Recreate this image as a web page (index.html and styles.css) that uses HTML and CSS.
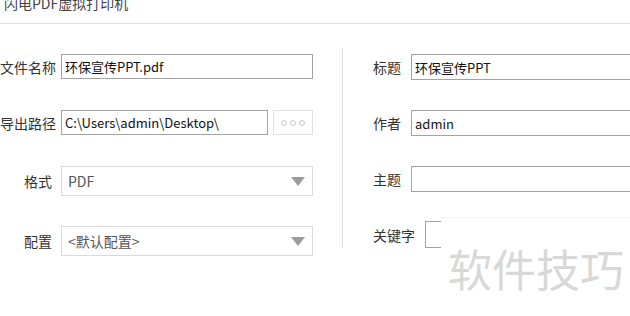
FILE: index.html
```html
<!DOCTYPE html>
<html lang="zh-CN">

<head>
    <meta charset="UTF-8">
    <meta name="viewport" content="width=device-width, initial-scale=1.0">
    <title>闪电PDF虚拟打印机</title>
    <link rel="stylesheet" href="styles.css">
</head>

<body>
    <header class="titleBar">
        <div class="titleText">闪电PDF虚拟打印机</div>
    </header>
    <div class="mainPanel">
        <div class="leftCol">
            <div class="row rowInput">
                <span class="label">文件名称</span>
                <div class="textBox wide">环保宣传PPT.pdf</div>
            </div>
            <div class="row rowInput">
                <span class="label">导出路径</span>
                <div class="textBox path">C:\Users\admin\Desktop\</div>
                <div class="dotsBtn"><i></i><i></i><i></i></div>
            </div>
            <div class="row rowSelect">
                <span class="label">格式</span>
                <div class="selectBox">PDF<span class="arrow"></span></div>
            </div>
            <div class="row rowSelect">
                <span class="label">配置</span>
                <div class="selectBox">&lt;默认配置&gt;<span class="arrow"></span></div>
            </div>
        </div>
        <div class="rightCol">
            <div class="rRow">
                <span class="rLabel">标题</span>
                <div class="textBox long">环保宣传PPT</div>
            </div>
            <div class="rRow">
                <span class="rLabel">作者</span>
                <div class="textBox long">admin</div>
            </div>
            <div class="rRow">
                <span class="rLabel">主题</span>
                <div class="textBox long"></div>
            </div>
            <div class="rRow last">
                <span class="rLabel">关键字</span>
                <div class="textBox long"></div>
            </div>
        </div>
    </div>
    <!-- watermark -->
    <div class="watermark">软件技巧</div>
</body>

</html>
```

FILE: styles.css
```css
* {
    margin: 0;
    padding: 0;
    box-sizing: border-box;
}

body {
    width: 630px;
    height: 316px;
    overflow: hidden;
    background-color: #fff;
    font-family: "Noto Sans CJK SC", "Noto Sans", sans-serif;
    color: #333;
    position: relative;
}

.titleBar {
    height: 24px;
    border-bottom: 1px solid #dcdcdc;
    padding-left: 4px;
    overflow: hidden;
}

.titleText {
    font-size: 14px;
    line-height: 14px;
    margin-top: -4px;
    color: #444;
}

.mainPanel {
    display: flex;
    align-items: flex-start;
    margin-top: 24px;
}

.leftCol {
    width: 342px;
    padding-top: 6px;
    flex-shrink: 0;
}

.row {
    display: flex;
    align-items: center;
}

.rowInput {
    height: 25px;
    margin-bottom: 31px;
}

.rowSelect {
    height: 30px;
    margin-bottom: 30px;
}

.label {
    width: 52px;
    margin-right: 9px;
    text-align: right;
    font-size: 14px;
    white-space: nowrap;
    color: #333;
}

.textBox {
    height: 100%;
    border: 1px solid #a3a3a3;
    font-size: 13px;
    color: #111;
    padding-left: 3px;
    display: flex;
    align-items: center;
    white-space: nowrap;
}

.wide {
    width: 252px;
}

.path {
    width: 207px;
}

.dotsBtn {
    width: 40px;
    height: 25px;
    margin-left: 5px;
    border: 1px solid #e2e2e2;
    display: flex;
    justify-content: center;
    align-items: center;
    gap: 3px;
}

.dotsBtn i {
    width: 6px;
    height: 6px;
    border: 1px solid #c8c8c8;
    border-radius: 50%;
}

.selectBox {
    width: 252px;
    height: 100%;
    border: 1px solid #dadada;
    font-size: 14px;
    color: #555;
    padding-left: 6px;
    display: flex;
    align-items: center;
    position: relative;
}

.arrow {
    position: absolute;
    right: 7px;
    top: 10px;
    width: 0;
    height: 0;
    border-left: 7px solid transparent;
    border-right: 7px solid transparent;
    border-top: 9px solid #9c9c9c;
}

.rightCol {
    flex: 1;
    border-left: 1px solid #dcdcdc;
    padding-top: 6px;
    padding-left: 30px;
    height: 200px;
}

.rRow {
    display: flex;
    align-items: center;
    height: 26px;
    margin-bottom: 30px;
    gap: 10px;
}

.rRow.last {
    height: 27px;
    margin-top: -1px;
    margin-bottom: 0;
}

.rLabel {
    font-size: 14px;
    color: #333;
    white-space: nowrap;
}

.long {
    width: 400px;
    flex-shrink: 0;
}

.watermark {
    position: absolute;
    left: 441px;
    top: 217px;
    width: 200px;
    height: 110px;
    background-color: #fff;
    border-top: 1px solid #f4f4f4;
    font-size: 44px;
    line-height: 44px;
    padding-top: 28px;
    padding-left: 7px;
    color: #d8d8d8;
    white-space: nowrap;
}
```
